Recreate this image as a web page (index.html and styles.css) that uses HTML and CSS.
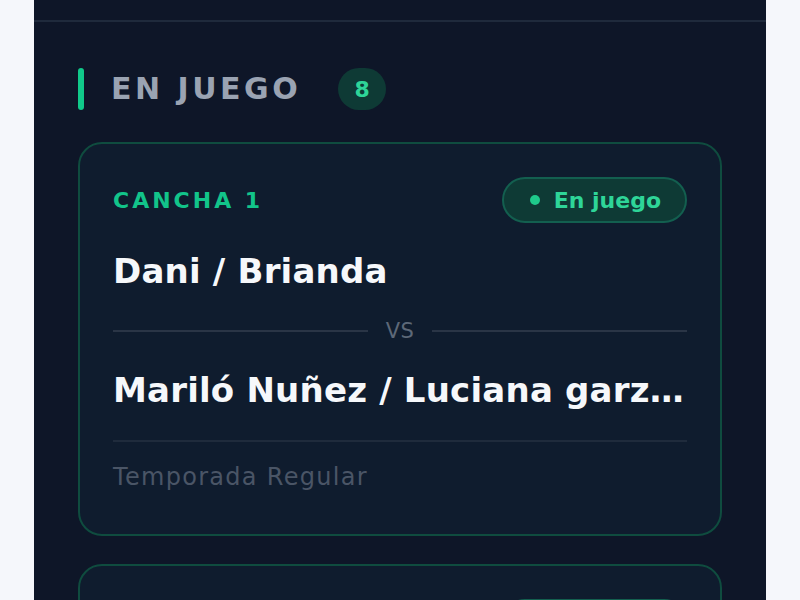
FILE: index.html
```html
<!DOCTYPE html>
<html lang="es">
<head>
<meta charset="utf-8">
<title>En juego</title>
<link rel="stylesheet" href="styles.css">
</head>
<body>
<div class="panel">
  <div class="topbar"></div>
  <section class="section">
    <div class="section-head">
      <span class="accent"></span>
      <h2 class="section-title">EN JUEGO</h2>
      <span class="count">8</span>
    </div>
    <div class="cards">
      <article class="card">
        <div class="card-head">
          <span class="court">CANCHA 1</span>
          <span class="pill"><span class="dot"></span>En juego</span>
        </div>
        <div class="team">Dani / Brianda</div>
        <div class="vs"><span class="vs-line"></span><span class="vs-text">VS</span><span class="vs-line"></span></div>
        <div class="team">Mariló Nuñez / Luciana garza Rodríguez</div>
        <div class="card-foot">Temporada Regular</div>
      </article>
      <article class="card">
        <div class="card-head">
          <span class="court">CANCHA 2</span>
          <span class="pill"><span class="dot"></span>En juego</span>
        </div>
        <div class="team">Equipo A / Equipo B</div>
      </article>
    </div>
  </section>
</div>
</body>
</html>
```
FILE: styles.css
```css
* { box-sizing: border-box; }
html, body { margin: 0; padding: 0; }
body {
  background: #f5f7fb;
  font-family: "DejaVu Sans", "Liberation Sans", sans-serif;
  overflow: hidden;
  height: 600px;
}
.panel {
  margin: 0 34px;
  background: #0e1628;
  min-height: 600px;
}
.topbar {
  height: 22px;
  border-bottom: 2px solid #1f2a3c;
}
.section {
  padding: 46px 44px 0;
}
.section-head {
  display: flex;
  align-items: center;
  height: 42px;
}
.accent {
  width: 6px;
  height: 42px;
  border-radius: 3px;
  background: #10c98a;
}
.section-title {
  margin: 0 0 0 27px;
  font-size: 30px;
  line-height: 42px;
  font-weight: 700;
  letter-spacing: 3.5px;
  color: #9aa3b2;
}
.count {
  margin-left: 37px;
  width: 48px;
  height: 42px;
  border-radius: 21px;
  background: #0e3a35;
  color: #2ed598;
  font-size: 22px;
  font-weight: 700;
  display: flex;
  align-items: center;
  justify-content: center;
}
.cards {
  margin-top: 32px;
  display: flex;
  flex-direction: column;
  gap: 28px;
}
.card {
  background: #0f1c2e;
  border: 2px solid #0f4c3f;
  border-radius: 24px;
  padding: 33px 33px 40px;
}
.card-head {
  display: flex;
  align-items: center;
  justify-content: space-between;
  height: 46px;
}
.court {
  font-size: 22px;
  font-weight: 700;
  letter-spacing: 3px;
  color: #12c48a;
}
.pill {
  display: flex;
  align-items: center;
  gap: 14px;
  height: 46px;
  padding: 0 24px 0 26px;
  border-radius: 23px;
  background: #0e3a35;
  border: 2px solid #135f4f;
  color: #2ed598;
  font-size: 22px;
  font-weight: 700;
}
.dot {
  width: 10px;
  height: 10px;
  border-radius: 50%;
  background: #1fc98b;
}
.team {
  margin-top: 26px;
  font-size: 34px;
  line-height: 45px;
  font-weight: 700;
  letter-spacing: 0.2px;
  color: #f6f8fb;
  white-space: nowrap;
  overflow: hidden;
  text-overflow: ellipsis;
}
.vs {
  margin-top: 22px;
  display: flex;
  align-items: center;
  gap: 18px;
  height: 30px;
}
.vs + .team { margin-top: 22px; }
.vs-line {
  flex: 1;
  height: 2px;
  background: #2a3546;
}
.vs-text {
  font-size: 21px;
  letter-spacing: 0.5px;
  color: #5d6878;
}
.card-foot {
  margin-top: 27px;
  border-top: 2px solid #1f2b3c;
  padding-top: 18px;
  font-size: 24px;
  line-height: 34px;
  letter-spacing: 1.3px;
  color: #4a5566;
}
```
